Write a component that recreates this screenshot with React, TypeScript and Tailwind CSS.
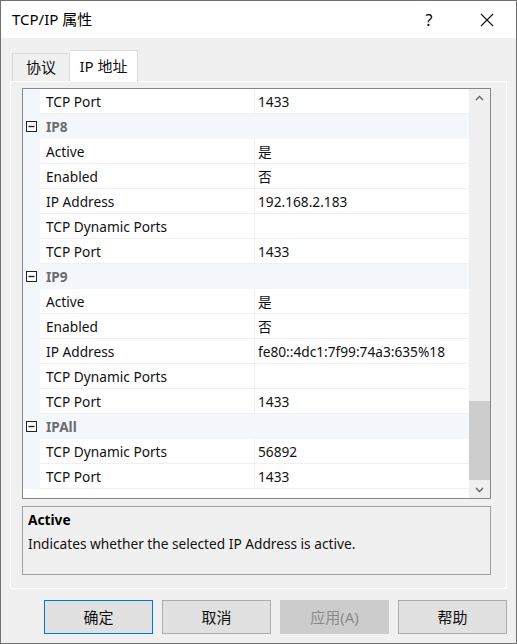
import React from "react";

type Row =
  | { kind: "cat"; label: string }
  | { kind: "prop"; name: string; value: string };

const ROWS: Row[] = [
  { kind: "prop", name: "TCP Port", value: "1433" },
  { kind: "cat", label: "IP8" },
  { kind: "prop", name: "Active", value: "是" },
  { kind: "prop", name: "Enabled", value: "否" },
  { kind: "prop", name: "IP Address", value: "192.168.2.183" },
  { kind: "prop", name: "TCP Dynamic Ports", value: "" },
  { kind: "prop", name: "TCP Port", value: "1433" },
  { kind: "cat", label: "IP9" },
  { kind: "prop", name: "Active", value: "是" },
  { kind: "prop", name: "Enabled", value: "否" },
  { kind: "prop", name: "IP Address", value: "fe80::4dc1:7f99:74a3:635%18" },
  { kind: "prop", name: "TCP Dynamic Ports", value: "" },
  { kind: "prop", name: "TCP Port", value: "1433" },
  { kind: "cat", label: "IPAll" },
  { kind: "prop", name: "TCP Dynamic Ports", value: "56892" },
  { kind: "prop", name: "TCP Port", value: "1433" },
];

const FONT = { fontFamily: '"Noto Sans", "Noto Sans CJK SC", sans-serif' };

function MinusBox() {
  return (
    <svg width="11" height="11" viewBox="0 0 11 11" className="block">
      <rect x="0.5" y="0.5" width="10" height="10" fill="white" stroke="#222" />
      <line x1="2.5" y1="5.5" x2="8.5" y2="5.5" stroke="#222" strokeWidth="1.4" />
    </svg>
  );
}

function GridRow({ row }: { row: Row }) {
  if (row.kind === "cat") {
    return (
      <div className="h-[25px] flex items-center bg-[#f4f7fb]">
        <div className="w-[17px] h-full flex items-center justify-center">
          <MinusBox />
        </div>
        <span className="pl-[6px] pt-[2px] text-[13.7px] font-bold text-[#6d6d6d]">{row.label}</span>
      </div>
    );
  }
  return (
    <div className="h-[25px] flex">
      <div className="w-[17px] h-full bg-[#f4f7fb]" />
      <div className="w-[215px] h-full flex items-center pl-[6px] pt-[2px] border-b border-[#f0f0f0] border-r text-[13.7px] text-[#111]">
        {row.name}
      </div>
      <div className="flex-1 h-full flex items-center pl-[3px] pt-[2px] border-b border-[#f0f0f0] text-[13.7px] text-[#111]">
        {row.value}
      </div>
    </div>
  );
}

function Scrollbar() {
  return (
    <div className="w-[21px] h-full bg-[#f0f0f0] flex flex-col">
      <div className="h-[17px] flex items-center justify-center">
        <svg width="9" height="6" viewBox="0 0 9 6">
          <path d="M1 5 L4.5 1.5 L8 5" fill="none" stroke="#606060" strokeWidth="1.3" />
        </svg>
      </div>
      <div className="flex-1 flex flex-col justify-end pb-[1px]">
        <div className="h-[79px] bg-[#cdcdcd]" />
      </div>
      <div className="h-[17px] flex items-center justify-center">
        <svg width="9" height="6" viewBox="0 0 9 6">
          <path d="M1 1 L4.5 4.5 L8 1" fill="none" stroke="#606060" strokeWidth="1.3" />
        </svg>
      </div>
    </div>
  );
}

function Btn({ label, primary, disabled }: { label: string; primary?: boolean; disabled?: boolean }) {
  return (
    <button
      className={
        "w-[109px] h-[34px] text-[15px] border " +
        (primary
          ? "bg-[#e1e1e1] border-[#0078d7] text-[#111]"
          : disabled
            ? "bg-[#cccccc] border-[#cccccc] text-[#8a8a8a]"
            : "bg-[#e1e1e1] border-[#adadad] text-[#111]")
      }
    >
      {label}
    </button>
  );
}

export default function App() {
  return (
    <div
      className="w-[517px] h-[644px] border border-[#707070] bg-[#f0f0f0] flex flex-col overflow-hidden"
      style={FONT}
    >
      <div className="h-[37px] bg-white flex items-center shrink-0">
        <span className="pl-[11px] text-[15px] text-black">TCP/IP 属性</span>
        <span className="ml-auto w-[20px] text-center text-[16px] text-black mr-[41px]">?</span>
        <svg width="14" height="14" viewBox="0 0 14 14" className="mr-[22px]">
          <path d="M1 1 L13 13 M13 1 L1 13" stroke="#111" strokeWidth="1.1" />
        </svg>
      </div>

      <div className="flex items-end pl-[11px] pt-[11px] h-[43px] shrink-0">
        <div className="w-[58px] h-[28px] border border-b-0 border-[#d9d9d9] bg-[#f0f0f0] flex items-center justify-center text-[15px] text-[#111]">
          协议
        </div>
        <div className="w-[68px] h-[32px] bg-white border border-b-0 border-[#d9d9d9] border-l-0 flex items-center justify-center text-[15px] text-[#111] relative top-[1px]">
          IP 地址
        </div>
      </div>

      <div className="mx-[9px] h-[508px] border border-white flex flex-col pl-[11px] pr-[15px] pt-[6px]">
        <div className="h-[411px] border border-[#828790] bg-white flex">
          <div className="flex-1 flex flex-col">
            {ROWS.map((r, i) => (
              <GridRow key={i} row={r} />
            ))}
          </div>
          <Scrollbar />
        </div>
        <div className="mt-[7px] h-[69px] border border-[#a0a0a0] bg-[#f0f0f0] px-[5px] pt-[3px]">
          <div className="text-[13.7px] font-bold text-black leading-[20px]">Active</div>
          <div className="text-[13.7px] text-[#111] leading-[20px] mt-[4px]">
            Indicates whether the selected IP Address is active.
          </div>
        </div>
      </div>

      <div className="flex pl-[43px] pt-[11px] gap-[9px]">
        <Btn label="确定" primary />
        <Btn label="取消" />
        <Btn label="应用(A)" disabled />
        <Btn label="帮助" />
      </div>
    </div>
  );
}
